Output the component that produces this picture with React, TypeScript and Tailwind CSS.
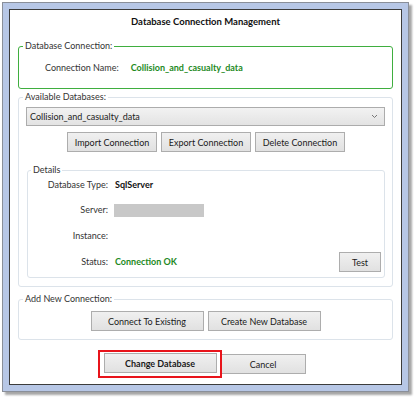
import React from 'react';

const font = { fontFamily: 'Lato, "Noto Sans", sans-serif' };

const Btn: React.FC<{ children: React.ReactNode; className?: string; bold?: boolean }> = ({ children, className = '', bold }) => (
  <button
    className={`h-[20px] border border-[#adadad] bg-gradient-to-b from-[#f0f0f0] to-[#e1e1e1] text-[9px] text-[#1a1a1a] leading-none ${bold ? 'font-bold' : ''} ${className}`}
  >
    {children}
  </button>
);

export default function App() {
  return (
    <div className="w-[415px] h-[398px] bg-white pl-[2px] pt-[2px] text-[9px] text-[#222]" style={font}>
      <div className="w-[407px] h-[390px] border border-[#8a8f99] bg-[#b7c7e6] p-[6px] shadow-[3px_3px_2px_rgba(0,0,0,0.35)]">
        <div className="w-full h-full border border-[#3c3c3c] bg-white pt-[5px]">
          <div className="text-center font-bold text-[9.5px] text-[#111] h-[14px] leading-[14px]">
            Database Connection Management
          </div>

          {/* connection */}
          <fieldset className="mx-[8px] mt-[11px] h-[49px] border border-[#3fae3f] rounded-[3px] pl-[2px]">
            <legend className="px-[2px] ml-[2px] text-[#333] leading-[12px]">Database Connection:</legend>
            <div className="flex items-center h-[14px] mt-[9px] pl-[24px]">
              <span className="text-[#333]">Connection Name:</span>
              <span className="ml-[12px] font-bold text-[#1e8a1e]">Collision_and_casualty_data</span>
            </div>
          </fieldset>

          {/* databases */}
          <fieldset className="mx-[8px] mt-[2px] h-[196px] border border-[#dce3ea] rounded-[3px] px-[7px]">
            <legend className="px-[2px] -ml-[3px] text-[#333] leading-[12px]">Available Databases:</legend>
            <div className="flex items-center justify-between h-[19px] mt-[4px] border border-[#acacac] bg-gradient-to-b from-[#f2f2f2] to-[#e3e3e3] pl-[3px] pr-[6px]">
              <span className="text-[#222]">Collision_and_casualty_data</span>
              <svg width="7" height="5" viewBox="0 0 7 5"><path d="M1 1 L3.5 3.5 L6 1" fill="none" stroke="#777" strokeWidth="1" /></svg>
            </div>
            <div className="flex justify-center gap-[4px] mt-[6px] pl-[1px]">
              <Btn className="w-[90px]">Import Connection</Btn>
              <Btn className="w-[90px]">Export Connection</Btn>
              <Btn className="w-[90px]">Delete Connection</Btn>
            </div>

            <fieldset className="ml-[1px] mt-[12px] h-[114px] border border-[#dce3ea] rounded-[3px] pr-[3px]">
              <legend className="px-[2px] ml-[3px] text-[#333] leading-[12px]">Details</legend>
              <div className="flex items-center h-[14px] mt-[2px]">
                <span className="w-[80px] text-right text-[#333]">Database Type:</span>
                <span className="ml-[7px] font-bold text-[#111]">SqlServer</span>
              </div>
              <div className="flex items-center h-[14px] mt-[11px]">
                <span className="w-[80px] text-right text-[#333]">Server:</span>
                <span className="ml-[6px] w-[90px] h-[13px] bg-[#c8c8c8]" />
              </div>
              <div className="flex items-center h-[14px] mt-[12px]">
                <span className="w-[80px] text-right text-[#333]">Instance:</span>
              </div>
              <div className="flex items-center justify-between h-[20px] mt-[9px]">
                <div className="flex items-center">
                  <span className="w-[80px] text-right text-[#333]">Status:</span>
                  <span className="ml-[7px] font-bold text-[#1e8a1e]">Connection OK</span>
                </div>
                <Btn className="w-[42px]">Test</Btn>
              </div>
            </fieldset>
          </fieldset>

          {/* add new */}
          <fieldset className="mx-[8px] mt-[6px] h-[47px] border border-[#dce3ea] rounded-[3px]">
            <legend className="px-[2px] ml-[4px] text-[#333] leading-[12px]">Add New Connection:</legend>
            <div className="flex justify-center gap-[4px] mt-[6px]">
              <Btn className="w-[113px]">Connect To Existing</Btn>
              <Btn className="w-[113px]">Create New Database</Btn>
            </div>
          </fieldset>

          <div className="flex justify-center mt-[10px] pr-[8px]">
            <div className="w-[124px] h-[28px] border-2 border-[#e8141b] pl-[4px] pt-[1px] z-10">
              <Btn bold className="w-[113px]">Change Database</Btn>
            </div>
            <Btn className="w-[85px] -ml-[1px] mt-[4px]">Cancel</Btn>
          </div>
        </div>
      </div>
    </div>
  );
}
